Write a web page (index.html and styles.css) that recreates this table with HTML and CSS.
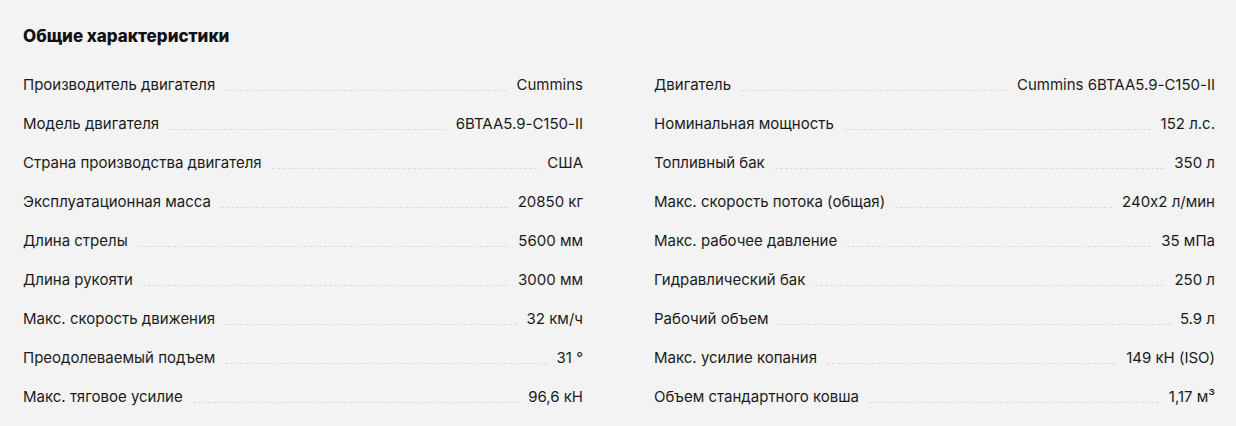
FILE: index.html
```html
<!DOCTYPE html>
<html lang="ru">
<head>
<meta charset="utf-8">
<link rel="stylesheet" href="styles.css">
</head>
<body>
<section class="specs">
  <h2 class="specs-title">Общие характеристики</h2>
  <div class="specs-grid">
    <div class="specs-col">
      <div class="row"><span class="label">Производитель двигателя</span><span class="dots"></span><span class="value">Cummins</span></div>
      <div class="row"><span class="label">Модель двигателя</span><span class="dots"></span><span class="value">6BTAA5.9-C150-II</span></div>
      <div class="row"><span class="label">Страна производства двигателя</span><span class="dots"></span><span class="value">США</span></div>
      <div class="row"><span class="label">Эксплуатационная масса</span><span class="dots"></span><span class="value">20850 кг</span></div>
      <div class="row"><span class="label">Длина стрелы</span><span class="dots"></span><span class="value">5600 мм</span></div>
      <div class="row"><span class="label">Длина рукояти</span><span class="dots"></span><span class="value">3000 мм</span></div>
      <div class="row"><span class="label">Макс. скорость движения</span><span class="dots"></span><span class="value">32 км/ч</span></div>
      <div class="row"><span class="label">Преодолеваемый подъем</span><span class="dots"></span><span class="value">31 °</span></div>
      <div class="row"><span class="label">Макс. тяговое усилие</span><span class="dots"></span><span class="value">96,6 кН</span></div>
    </div>
    <div class="specs-col">
      <div class="row"><span class="label">Двигатель</span><span class="dots"></span><span class="value">Cummins 6BTAA5.9-C150-II</span></div>
      <div class="row"><span class="label">Номинальная мощность</span><span class="dots"></span><span class="value">152 л.с.</span></div>
      <div class="row"><span class="label">Топливный бак</span><span class="dots"></span><span class="value">350 л</span></div>
      <div class="row"><span class="label">Макс. скорость потока (общая)</span><span class="dots"></span><span class="value">240x2 л/мин</span></div>
      <div class="row"><span class="label">Макс. рабочее давление</span><span class="dots"></span><span class="value">35 мПа</span></div>
      <div class="row"><span class="label">Гидравлический бак</span><span class="dots"></span><span class="value">250 л</span></div>
      <div class="row"><span class="label">Рабочий объем</span><span class="dots"></span><span class="value">5.9 л</span></div>
      <div class="row"><span class="label">Макс. усилие копания</span><span class="dots"></span><span class="value">149 кН (ISO)</span></div>
      <div class="row"><span class="label">Объем стандартного ковша</span><span class="dots"></span><span class="value">1,17 м³</span></div>
    </div>
  </div>
</section>
</body>
</html>
```

FILE: styles.css
```css
html, body {
  margin: 0;
  padding: 0;
  background: #f3f3f3;
}
body {
  font-family: "Inter", "Noto Sans", sans-serif;
  font-feature-settings: "calt" 0;
  color: #1b1b1b;
}
.specs {
  padding: 26px 21px 0 23px;
}
.specs-title {
  margin: 0 0 9px 0;
  font-size: 17px;
  font-weight: 800;
  line-height: 20px;
  color: #111;
}
.specs-grid {
  display: grid;
  grid-template-columns: 560px 561px;
  column-gap: 71px;
}
.specs-col {
  display: flex;
  flex-direction: column;
}
.row {
  display: flex;
  align-items: flex-end;
  height: 39px;
  font-size: 15px;
  line-height: 18px;
}
.label, .value {
  white-space: nowrap;
}
.dots {
  flex: 1;
  margin: 0 10px 3px 10px;
  border-bottom: 1px dashed #dadada;
}
```
